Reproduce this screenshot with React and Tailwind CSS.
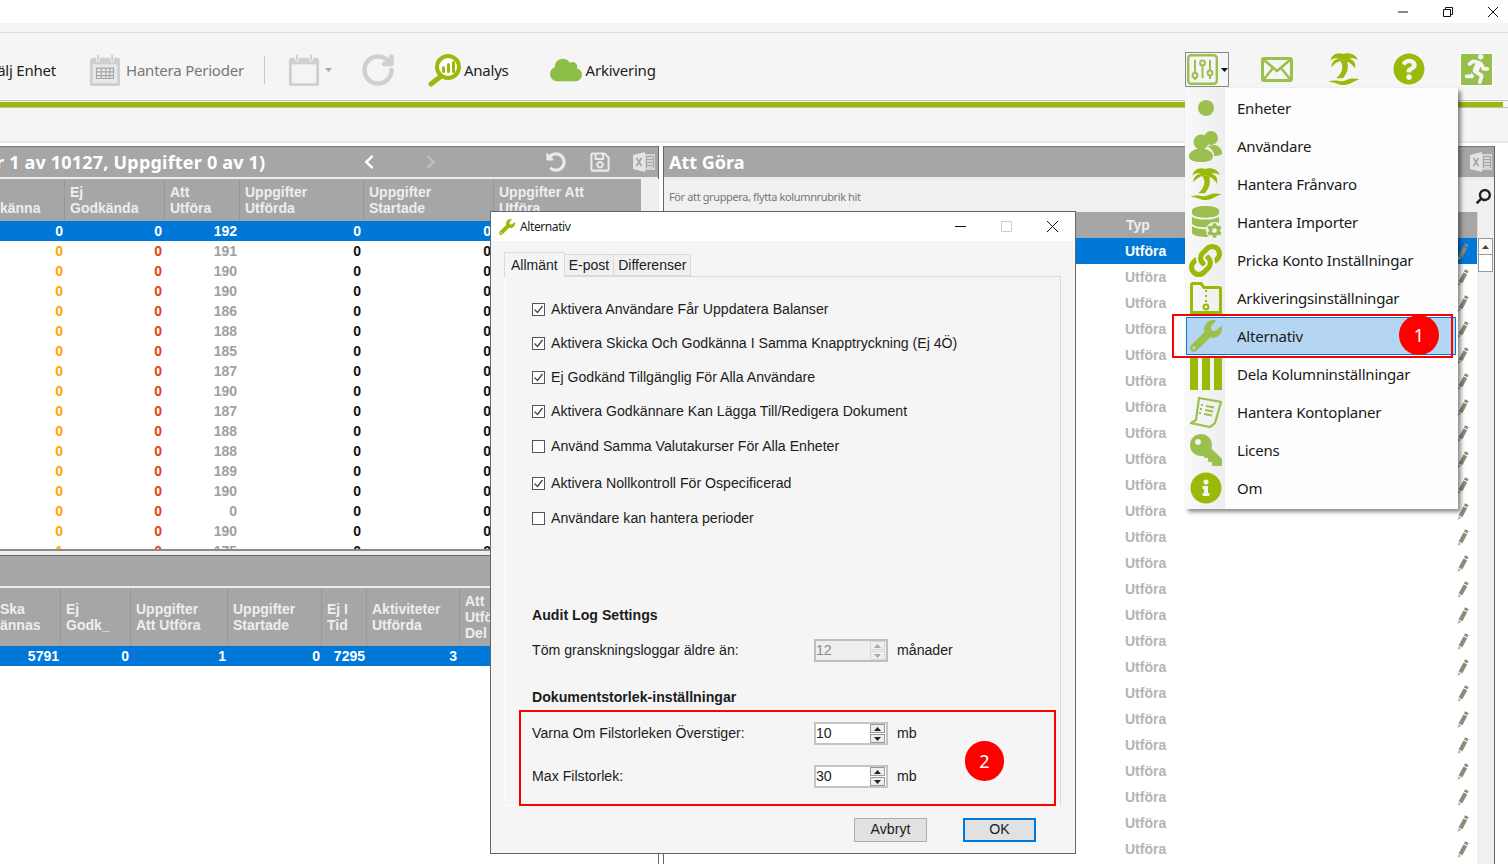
import React from "react";
import { FaWrench, FaDatabase, FaCog, FaLink, FaKey, FaInfoCircle, FaRunning, FaQuestionCircle, FaCloud, FaUndoAlt, FaRegSave, FaSearch, FaChevronLeft, FaChevronRight } from "react-icons/fa";
import { RotateCw } from "lucide-react";

const G = "#9aba0a";
const L = "#9cc04e";

const Palm = ({ size = 32, color = G }) => (
  <svg width={size} height={size} viewBox="0 0 32 33" fill={color}>
    <path d="M15 1C9-1 3 2 2 8c3-3 6-3 9-2C6 6 3 10 3 15c3-4 6-6 10-7l3 0c4 1 9 3 11 8 2-5-1-9-6-10 3-1 6-1 9 1C29 2 21-1 15 1z" />
    <path d="M12 8c4 5 3 12-4 18h7c5-6 6-12 4-18z" />
    <path d="M0 30c7-4 12 1 18-2 4-2 9-2 14-1-6 2-11 6-17 6-6 0-9-4-15-3z" />
  </svg>
);
const Users = () => (
  <svg width="33" height="31" viewBox="0 0 33 31" fill={L}>
    <circle cx="22" cy="7" r="7" />
    <path d="M18 15l8-1c4 1 7 4 7 8 0 2-3 3-8 3 0-5-3-8-7-10z" />
    <circle cx="12" cy="11" r="7.5" />
    <path d="M0 26c0-5 4-7 8-8h8c4 1 8 3 8 8 0 3-5 5-12 5S0 29 0 26z" />
  </svg>
);
const Pencil = () => (
  <svg width="12" height="17" viewBox="0 0 12 17">
    <path d="M8 0.3l3.6 1.6-1 2.4L7 2.7z" fill="#8c8a78" />
    <path d="M6.4 3.6l3.8 1.7-4.8 9-3.8-1.7z" fill="#8c8a78" />
    <path d="M1.3 13.2L4.6 14.8 0.6 16.9z" fill="#b9b8aa" />
  </svg>
);
const Excel = ({ color = "#e3e3e3" }) => (
  <svg width="22" height="20" viewBox="0 0 22 20">
    <path d="M0 3l12-3v20L0 17z" fill={color} />
    <path d="M3.5 6l5 8M8.5 6l-5 8" stroke="#a6a6a6" strokeWidth="1.6" />
    <path d="M12 3h10v14H12z" fill="none" stroke={color} strokeWidth="1.4" />
    <path d="M14 6h6M14 9h6M14 12h6M14 15h6" stroke={color} strokeWidth="1.3" />
  </svg>
);
const Cal = ({ size = 32, grid }) => (
  <svg width={size} height={size} viewBox="0 0 32 34">
    <rect x="0" y="4" width="32" height="30" rx="3" fill="#cfcfcf" />
    <rect x="3" y="11" width="26" height="20" fill={grid ? "#e9e9e9" : "#f4f4f4"} />
    <rect x="7" y="0" width="3" height="8" rx="1.5" fill="#cfcfcf" stroke="#f5f5f5" />
    <rect x="22" y="0" width="3" height="8" rx="1.5" fill="#cfcfcf" stroke="#f5f5f5" />
    {grid && <path d="M7 15h18v11H7zM7 19h18M7 23h18M12 15v11M17 15v11M21 15v11" fill="none" stroke="#a5a5a5" strokeWidth="1.2" />}
  </svg>
);
const Analys = () => (
  <svg width="33" height="33" viewBox="0 0 33 33">
    <circle cx="20" cy="13" r="11" fill="#fff" stroke={G} strokeWidth="4" />
    <path d="M12 23L3 30" stroke={G} strokeWidth="5" strokeLinecap="round" />
    <rect x="14" y="12" width="3" height="7" rx="1.5" fill={G} />
    <rect x="19" y="9" width="3" height="10" rx="1.5" fill={G} />
    <rect x="24" y="7" width="3" height="12" rx="1.5" fill={G} />
  </svg>
);
const Sliders = () => (
  <svg width="31" height="31" viewBox="0 0 31 31" fill="none" stroke={L} strokeWidth="2">
    <rect x="1.2" y="1.2" width="28.6" height="28.6" rx="3" strokeWidth="2.4" />
    <path d="M8 6v13M15.5 6v18M23 6v10M23 22v3M8 24v2" />
    <circle cx="8" cy="21.5" r="2.4" />
    <circle cx="15.5" cy="9" r="2.4" fill="#f5f5f5" />
    <circle cx="23" cy="19" r="2.4" />
  </svg>
);
const Mail = () => (
  <svg width="32" height="25" viewBox="0 0 32 25">
    <rect width="32" height="25" rx="3" fill={L} />
    <rect x="3" y="3" width="26" height="19" fill="#f5f5f5" />
    <path d="M3 3l13 11L29 3M3 22l9-11M29 22l-9-11" fill="none" stroke={L} strokeWidth="2.6" />
  </svg>
);
const Folder = () => (
  <svg width="32" height="32" viewBox="0 0 32 32" fill="none" stroke={G} strokeWidth="3">
    <path d="M1.5 30.5V3a1.5 1.5 0 011.5-1.5h8l3 4h15a1.5 1.5 0 011.5 1.5v23.5z" />
    <path d="M16 8v2M16 13v2M16 18v2" strokeWidth="2" />
    <circle cx="16" cy="25" r="2.4" strokeWidth="2" />
  </svg>
);
const Columns = () => (
  <svg width="32" height="32" viewBox="0 0 32 32" fill={G}>
    <rect x="0" width="8" height="32" />
    <rect x="12" width="8" height="32" />
    <rect x="24" width="8" height="32" />
  </svg>
);
const ScrollDoc = () => (
  <svg width="32" height="32" viewBox="0 0 32 32" fill="none" stroke={L} strokeWidth="2.2">
    <path d="M9 2l22 4-6 21-5 4L1 27l5-3z" />
    <path d="M11 9h2M16 10l8 1.5M10 13h2M15 14l8 1.5M9 17h2M14 18l8 1.5" strokeWidth="1.8" />
  </svg>
);

const menu = [
  ["Enheter", <div className="w-[16px] h-[16px] rounded-full bg-[#9cc04e]" />],
  ["Användare", <Users />],
  ["Hantera Frånvaro", <Palm />],
  ["Hantera Importer", (
    <div className="relative w-[32px] h-[32px]">
      <FaDatabase size={31} color={L} />
      <div className="absolute right-[-1px] bottom-[-1px] bg-[#f3f3f3] rounded-full p-[1px]"><FaCog size={15} color={L} /></div>
    </div>
  )],
  ["Pricka Konto Inställningar", <FaLink size={33} color={G} />],
  ["Arkiveringsinställningar", <Folder />],
  ["Alternativ", <FaWrench size={32} color={L} />],
  ["Dela Kolumninställningar", <Columns />],
  ["Hantera Kontoplaner", <ScrollDoc />],
  ["Licens", <div className="-scale-x-100"><FaKey size={32} color={L} /></div>],
  ["Om", <FaInfoCircle size={32} color={G} />],
];

const leftRows = [192, 191, 190, 190, 186, 188, 185, 187, 190, 187, 188, 188, 189, 190, 0, 190, 175];
const leftCols = "grid grid-cols-[65px_100px_75px_124px_130px_165px]";
const botCols = "grid grid-cols-[61px_70px_97px_94px_45px_93px_40px]";

const HeadCell = ({ children, cls = "pl-[5px] pt-[5px]" }) => (
  <div className={`border-r border-[#989898] text-[14px] leading-[16px] font-bold text-[#eeeeee] overflow-hidden whitespace-pre-line ${cls}`}>{children}</div>
);

const Check = ({ label, on = true, mt }) => (
  <div className={`flex items-center h-[20px] ${mt}`}>
    <div className="w-[13px] h-[13px] -mt-[1px] border border-[#555] bg-white flex items-center justify-center">
      {on && <svg width="11" height="11" viewBox="0 0 11 11"><path d="M1.5 5.5l3 3 5-6.5" fill="none" stroke="#444" strokeWidth="1.3" /></svg>}
    </div>
    <span className="ml-[6px]">{label}</span>
  </div>
);

const Arrow = ({ up, color }) => (
  <svg width="7" height="4" viewBox="0 0 7 4"><path d={up ? "M3.5 0L7 4H0z" : "M0 0h7L3.5 4z"} fill={color} /></svg>
);
const Spinner = ({ value, disabled }) => (
  <div className={`w-[74px] h-[23px] border-2 flex items-center justify-between pr-[1px] ${disabled ? "border-[#bfbfbf] bg-[#efefef] text-[#8a8a8a]" : "border-[#c4c4c4] bg-white text-[#222]"}`}>
    <span className="leading-[18px] -mt-[2px]">{value}</span>
    <div className="flex flex-col gap-[1px]">
      <div className={`w-[15px] h-[9px] border flex items-center justify-center ${disabled ? "border-[#d8d8d8] bg-[#f0f0f0]" : "border-[#9a9a9a] bg-[#eeeeee]"}`}><Arrow up color={disabled ? "#a8a8a8" : "#222"} /></div>
      <div className={`w-[15px] h-[9px] border flex items-center justify-center ${disabled ? "border-[#d8d8d8] bg-[#f0f0f0]" : "border-[#9a9a9a] bg-[#eeeeee]"}`}><Arrow color={disabled ? "#a8a8a8" : "#222"} /></div>
    </div>
  </div>
);
const SpinRow = ({ label, value, unit, disabled, mt }) => (
  <div className={`flex items-center h-[23px] ${mt}`}>
    <span className="w-[282px]">{label}</span>
    <Spinner value={value} disabled={disabled} />
    <span className="ml-[9px]">{unit}</span>
  </div>
);

export default function App() {
  return (
    <div className="relative w-[1508px] h-[864px] overflow-hidden bg-white font-['Liberation_Sans',sans-serif]">
      {/* title bar */}
      <div className="h-[23px] bg-white flex items-center justify-end pr-[10px] gap-[35px]">
        <svg width="10" height="10" viewBox="0 0 10 10"><path d="M0 5h10" stroke="#111" /></svg>
        <svg width="10" height="10" viewBox="0 0 10 10" fill="none" stroke="#111"><path d="M.5 2.5h7v7h-7zM2.5 2.5v-2h7v7h-2" /></svg>
        <svg width="10" height="10" viewBox="0 0 10 10"><path d="M0 0l10 10M10 0L0 10" stroke="#111" /></svg>
      </div>

      {/* toolbar */}
      <div className="h-[77px] bg-[#f5f5f5] flex flex-col">
        <div className="h-[10px] border-b border-[#dcdcdc]" />
        <div className="flex-1 flex items-center text-[15px] tracking-[-0.22px] font-['Noto_Sans',sans-serif] relative">
          <div className="w-[56px] overflow-hidden flex justify-end mt-[8px]"><span className="whitespace-nowrap text-[#222]">Välj Enhet</span></div>
          <div className="ml-[33px] mt-[8px]"><Cal grid /></div>
          <span className="ml-[5px] mt-[8px] text-[#777]">Hantera Perioder</span>
          <div className="ml-[20px] mt-[8px] w-[1px] h-[28px] bg-[#c8c8c8]" />
          <div className="ml-[23px] mt-[8px]"><Cal /></div>
          <div className="ml-[5px] mt-[8px]"><Arrow color="#aaa" /></div>
          <div className="ml-[28px] mt-[8px]"><RotateCw size={36} color="#d0d0d0" strokeWidth={3} /></div>
          <div className="ml-[32px] mt-[8px]"><Analys /></div>
          <span className="ml-[3px] mt-[8px] text-[#222]">Analys</span>
          <div className="ml-[41px] mt-[8px]"><FaCloud size={32} color="#8cbd46" /></div>
          <span className="ml-[4px] mt-[8px] text-[#222]">Arkivering</span>
          <div className="flex-1" />
          <div className="w-[44px] h-[35px] border border-[#8a8a8a] flex items-center pl-[1px] gap-[3px] mt-[7px]">
            <Sliders />
            <Arrow color="#111" />
          </div>
          <div className="ml-[32px] mt-[6px]"><Mail /></div>
          <div className="ml-[35px] mt-[6px]"><Palm /></div>
          <div className="ml-[33px] mt-[6px]"><FaQuestionCircle size={32} color={G} /></div>
          <div className="ml-[35px] mr-[15px] mt-[6px] w-[33px] h-[33px] bg-[#97bf4b] border border-white flex items-center justify-center"><FaRunning size={30} color="#f5f5f5" /></div>
        </div>
        <div className="h-[1px] bg-[#ffffff]" />
      </div>

      {/* green bar */}
      <div className="h-[10px] bg-[#f5f5f5] flex flex-col">
        <div className="h-[1px] bg-[#c0c0c0]" />
        <div className="h-[1px]" />
        <div className="h-[5px] bg-[#9aba0a] w-[1503px]" />
        <div className="h-[1px] bg-[#c0c0c0]" />
      </div>

      {/* band */}
      <div className="h-[33px] bg-[#f5f5f5] border-b-2 border-[#e8e8e8]" />
      <div className="h-[3px] bg-white" />

      {/* panels */}
      <div className="flex h-[721px]">
        {/* left */}
        <div className="w-[659px] shrink-0 flex flex-col border-r border-[#666] bg-white">
          <div className="h-[31px] border-t border-[#777] bg-[#a6a6a6] flex items-center text-white font-['Noto_Sans',sans-serif] font-bold text-[18px] tracking-[0.2px] relative overflow-hidden">
            <span className="ml-[-4px] whitespace-nowrap">r 1 av 10127, Uppgifter 0 av 1)</span>
            <div className="ml-[96px]"><FaChevronLeft size={16} color="#fff" /></div>
            <div className="ml-[46px]"><FaChevronRight size={16} color="#bdbdbd" /></div>
            <div className="ml-[107px]"><FaUndoAlt size={20} color="#eaeaea" /></div>
            <div className="ml-[23px]"><FaRegSave size={22} color="#eaeaea" /></div>
            <div className="ml-[22px]"><Excel /></div>
          </div>
          <div className="h-[2px] bg-[#ececec]" />
          <div className={`${leftCols} h-[42px] bg-[#a6a6a6]`}>
            <HeadCell cls="pt-[5px]">{"\nkänna"}</HeadCell>
            <HeadCell>{"Ej\nGodkända"}</HeadCell>
            <HeadCell>{"Att\nUtföra"}</HeadCell>
            <HeadCell>{"Uppgifter\nUtförda"}</HeadCell>
            <HeadCell>{"Uppgifter\nStartade"}</HeadCell>
            <div className="flex">
              <HeadCell cls="pl-[5px] pt-[5px] w-[147px] border-r-0">{"Uppgifter Att\nUtföra"}</HeadCell>
              <div className="w-[18px] bg-[#efefef]" />
            </div>
          </div>
          <div className="h-[330px] overflow-hidden border-b-2 border-[#8a8a8a]">
            {leftRows.map((v, i) => {
              const sel = i === 0;
              return (
                <div key={i} className={`${leftCols} h-[20px] items-center text-right text-[14px] font-bold ${sel ? "bg-[#0078d7] text-white" : ""}`}>
                  <span className={`pr-[2px] ${sel ? "" : "text-[#ffa500]"}`}>{i === 16 ? 1 : 0}</span>
                  <span className={`pr-[3px] ${sel ? "" : "text-[#e8400c]"}`}>0</span>
                  <span className={`pr-[3px] ${sel ? "" : "text-[#a0a0a0]"}`}>{v}</span>
                  <span className={`pr-[3px] ${sel ? "" : "text-[#111]"}`}>0</span>
                  <span className={`pr-[3px] ${sel ? "" : "text-[#111]"}`}>0</span>
                </div>
              );
            })}
          </div>
          <div className="h-[5px] bg-[#efefef] border-b border-[#666]" />
          <div className="h-[30px] bg-[#a6a6a6]" />
          <div className="h-[2px] bg-[#ececec]" />
          <div className={`${botCols} h-[58px] bg-[#a6a6a6]`}>
            <HeadCell cls="pt-[13px]">{"Ska\nännas"}</HeadCell>
            <HeadCell cls="pl-[5px] pt-[13px]">{"Ej\nGodk_"}</HeadCell>
            <HeadCell cls="pl-[5px] pt-[13px]">{"Uppgifter\nAtt Utföra"}</HeadCell>
            <HeadCell cls="pl-[5px] pt-[13px]">{"Uppgifter\nStartade"}</HeadCell>
            <HeadCell cls="pl-[5px] pt-[13px]">{"Ej I\nTid"}</HeadCell>
            <HeadCell cls="pl-[5px] pt-[13px]">{"Aktiviteter\nUtförda"}</HeadCell>
            <HeadCell cls="pl-[5px] pt-[5px] border-r-0">{"Att\nUtföra\nDel"}</HeadCell>
          </div>
          <div className="w-[659px] h-[20px] bg-[#0078d7]">
            <div className={`${botCols} h-[20px] items-center text-right text-[14px] font-bold text-white`}>
              <span className="pr-[2px]">5791</span>
              <span className="pr-[2px]">0</span>
              <span className="pr-[2px]">1</span>
              <span className="pr-[2px]">0</span>
              <span className="pr-[2px]">7295</span>
              <span className="pr-[3px]">3</span>
            </div>
          </div>
        </div>
        <div className="w-[4px] shrink-0 bg-white" />
        {/* right */}
        <div className="w-[832px] shrink-0 flex flex-col border-x border-[#666] overflow-hidden">
          <div className="h-[31px] border-t border-[#777] bg-[#a6a6a6] flex items-center justify-between pl-[5px] pr-[2px] text-white font-['Noto_Sans',sans-serif] font-bold text-[18px]">
            <span>Att Göra</span>
            <Excel />
          </div>
          <div className="h-[3px] bg-[#ececec]" />
          <div className="h-[32px] bg-[#f0f0f0] flex items-center justify-between pl-[5px] pr-[3px] text-[11px] text-[#777]">
            <span className="mt-[2px] font-['Noto_Sans',sans-serif] tracking-[-0.38px]">För att gruppera, flytta kolumnrubrik hit</span>
            <div className="-scale-x-100"><FaSearch size={15} color="#222" /></div>
          </div>
          <div className="flex-1 flex min-h-0">
            <div className="w-[813px] flex flex-col">
              <div className="h-[26px] shrink-0 bg-[#a6a6a6] pl-[462px] flex items-center text-[14px] font-bold text-[#eeeeee]">Typ</div>
              {Array.from({ length: 25 }).map((_, i) => (
                <div key={i} className={`h-[26px] shrink-0 flex items-center justify-between pl-[461px] pr-[8px] text-[14px] font-bold ${i === 0 ? "bg-[#0078d7] text-white" : "text-[#b4b4b4]"}`}>
                  <span>Utföra</span>
                  <Pencil />
                </div>
              ))}
            </div>
            <div className="flex-1 bg-[#f0f0f0] flex flex-col">
              <div className="h-[26px] bg-[#f0f0f0] border-l border-[#dcdcdc]" />
              <div className="mx-[1px] h-[17px] bg-[#f8f8f8] border border-[#999] flex items-center justify-center"><Arrow up color="#444" /></div>
              <div className="mx-[1px] h-[17px] bg-white border border-[#999] border-t-0" />
            </div>
          </div>
        </div>
      </div>

      {/* dropdown menu */}
      <div className="absolute left-[1185px] top-[88px] w-[273px] h-[421px] pt-[1px] bg-[#fdfdfd] shadow-[3px_3px_4px_rgba(0,0,0,0.45)] flex flex-col text-[15px] tracking-[-0.22px] text-[#1a1a1a] font-['Noto_Sans',sans-serif]">
        <div className="absolute left-0 top-0 bottom-0 w-[40px] bg-gradient-to-r from-[#f9f9f9] to-[#eeeeee]" />
        {menu.map(([t, ic], i) => (
          <div key={t} className={`relative h-[38px] ml-[1px] mr-[2px] shrink-0 flex items-center border ${i === 6 ? "bg-[#b5d6f2] border-[#0078d7]" : "border-transparent"}`}>
            <div className="w-[37px] flex items-center justify-center">{ic}</div>
            <span className="ml-[13px] whitespace-nowrap">{t}</span>
          </div>
        ))}
      </div>

      {/* dialog */}
      <div className="absolute left-[490px] top-[211px] w-[586px] h-[643px] bg-[#f5f5f5] border border-[#666] flex flex-col text-[14.15px] text-[#1c1c1c]">
        <div className="h-[29px] bg-white flex items-center pl-[8px] text-[12px] shrink-0 font-['Noto_Sans',sans-serif]">
          <FaWrench size={16} color={G} />
          <span className="ml-[5px] tracking-[-0.4px]">Alternativ</span>
          <div className="flex-1" />
          <svg width="11" height="11" viewBox="0 0 11 11"><path d="M0 5.5h11" stroke="#111" /></svg>
          <svg className="ml-[35px]" width="11" height="11" viewBox="0 0 11 11"><path d="M.5.5h10v10H.5z" fill="none" stroke="#ccc" /></svg>
          <svg className="ml-[35px] mr-[17px]" width="11" height="11" viewBox="0 0 11 11"><path d="M0 0l11 11M11 0L0 11" stroke="#111" /></svg>
        </div>
        <div className="flex items-end pl-[13px] h-[35px] shrink-0 text-[14px]">
          <div className="h-[25px] px-[6px] bg-[#f5f5f5] border border-b-0 border-[#dadada] flex items-center -mb-[1px] relative">Allmänt</div>
          <div className="h-[22px] px-[4px] bg-[#f0f0f0] border border-l-0 border-[#dadada] flex items-center">E-post</div>
          <div className="h-[22px] px-[4px] bg-[#f0f0f0] border border-l-0 border-[#dadada] flex items-center">Differenser</div>
        </div>
        <div className="mx-[14px] h-[530px] shrink-0 border border-[#dadada] border-b-white border-l-white pl-[26px] pt-[23px] flex flex-col">
          <Check label="Aktivera Användare Får Uppdatera Balanser" />
          <Check label="Aktivera Skicka Och Godkänna I Samma Knapptryckning (Ej 4Ö)" mt="mt-[14px]" />
          <Check label="Ej Godkänd Tillgänglig För Alla Användare" mt="mt-[14px]" />
          <Check label="Aktivera Godkännare Kan Lägga Till/Redigera Dokument" mt="mt-[14px]" />
          <Check label="Använd Samma Valutakurser För Alla Enheter" on={false} mt="mt-[15px]" />
          <Check label="Aktivera Nollkontroll För Ospecificerad" mt="mt-[17px]" />
          <Check label="Användare kan hantera perioder" on={false} mt="mt-[15px]" />
          <div className="mt-[77px] h-[20px] flex items-center font-bold">Audit Log Settings</div>
          <SpinRow label="Töm granskningsloggar äldre än:" value="12" unit="månader" disabled mt="mt-[13px]" />
          <div className="mt-[26px] h-[20px] flex items-center font-bold">Dokumentstorlek-inställningar</div>
          <SpinRow label="Varna Om Filstorleken Överstiger:" value="10" unit="mb" mt="mt-[14px]" />
          <SpinRow label="Max Filstorlek:" value="30" unit="mb" mt="mt-[20px]" />
        </div>
        <div className="flex justify-end pr-[39px] mt-[12px] gap-[36px]">
          <div className="w-[73px] h-[24px] bg-[#e1e1e1] border border-[#adadad] flex items-center justify-center">Avbryt</div>
          <div className="w-[73px] h-[24px] bg-[#e1e1e1] border-2 border-[#0078d7] flex items-center justify-center">OK</div>
        </div>
      </div>

      {/* annotations */}
      <div className="absolute left-[1172px] top-[314px] w-[281px] h-[44px] border-2 border-[#ff0000]" />
      <div className="absolute left-[1399px] top-[315px] w-[40px] h-[40px] rounded-full bg-[#ff0000] text-white text-[18px] flex items-center justify-center font-['Noto_Sans',sans-serif]">1</div>
      <div className="absolute left-[519px] top-[710px] w-[537px] h-[96px] border-2 border-[#ff0000]" />
      <div className="absolute left-[965px] top-[741px] w-[39px] h-[40px] rounded-full bg-[#ff0000] text-white text-[18px] flex items-center justify-center font-['Noto_Sans',sans-serif]">2</div>
    </div>
  );
}
